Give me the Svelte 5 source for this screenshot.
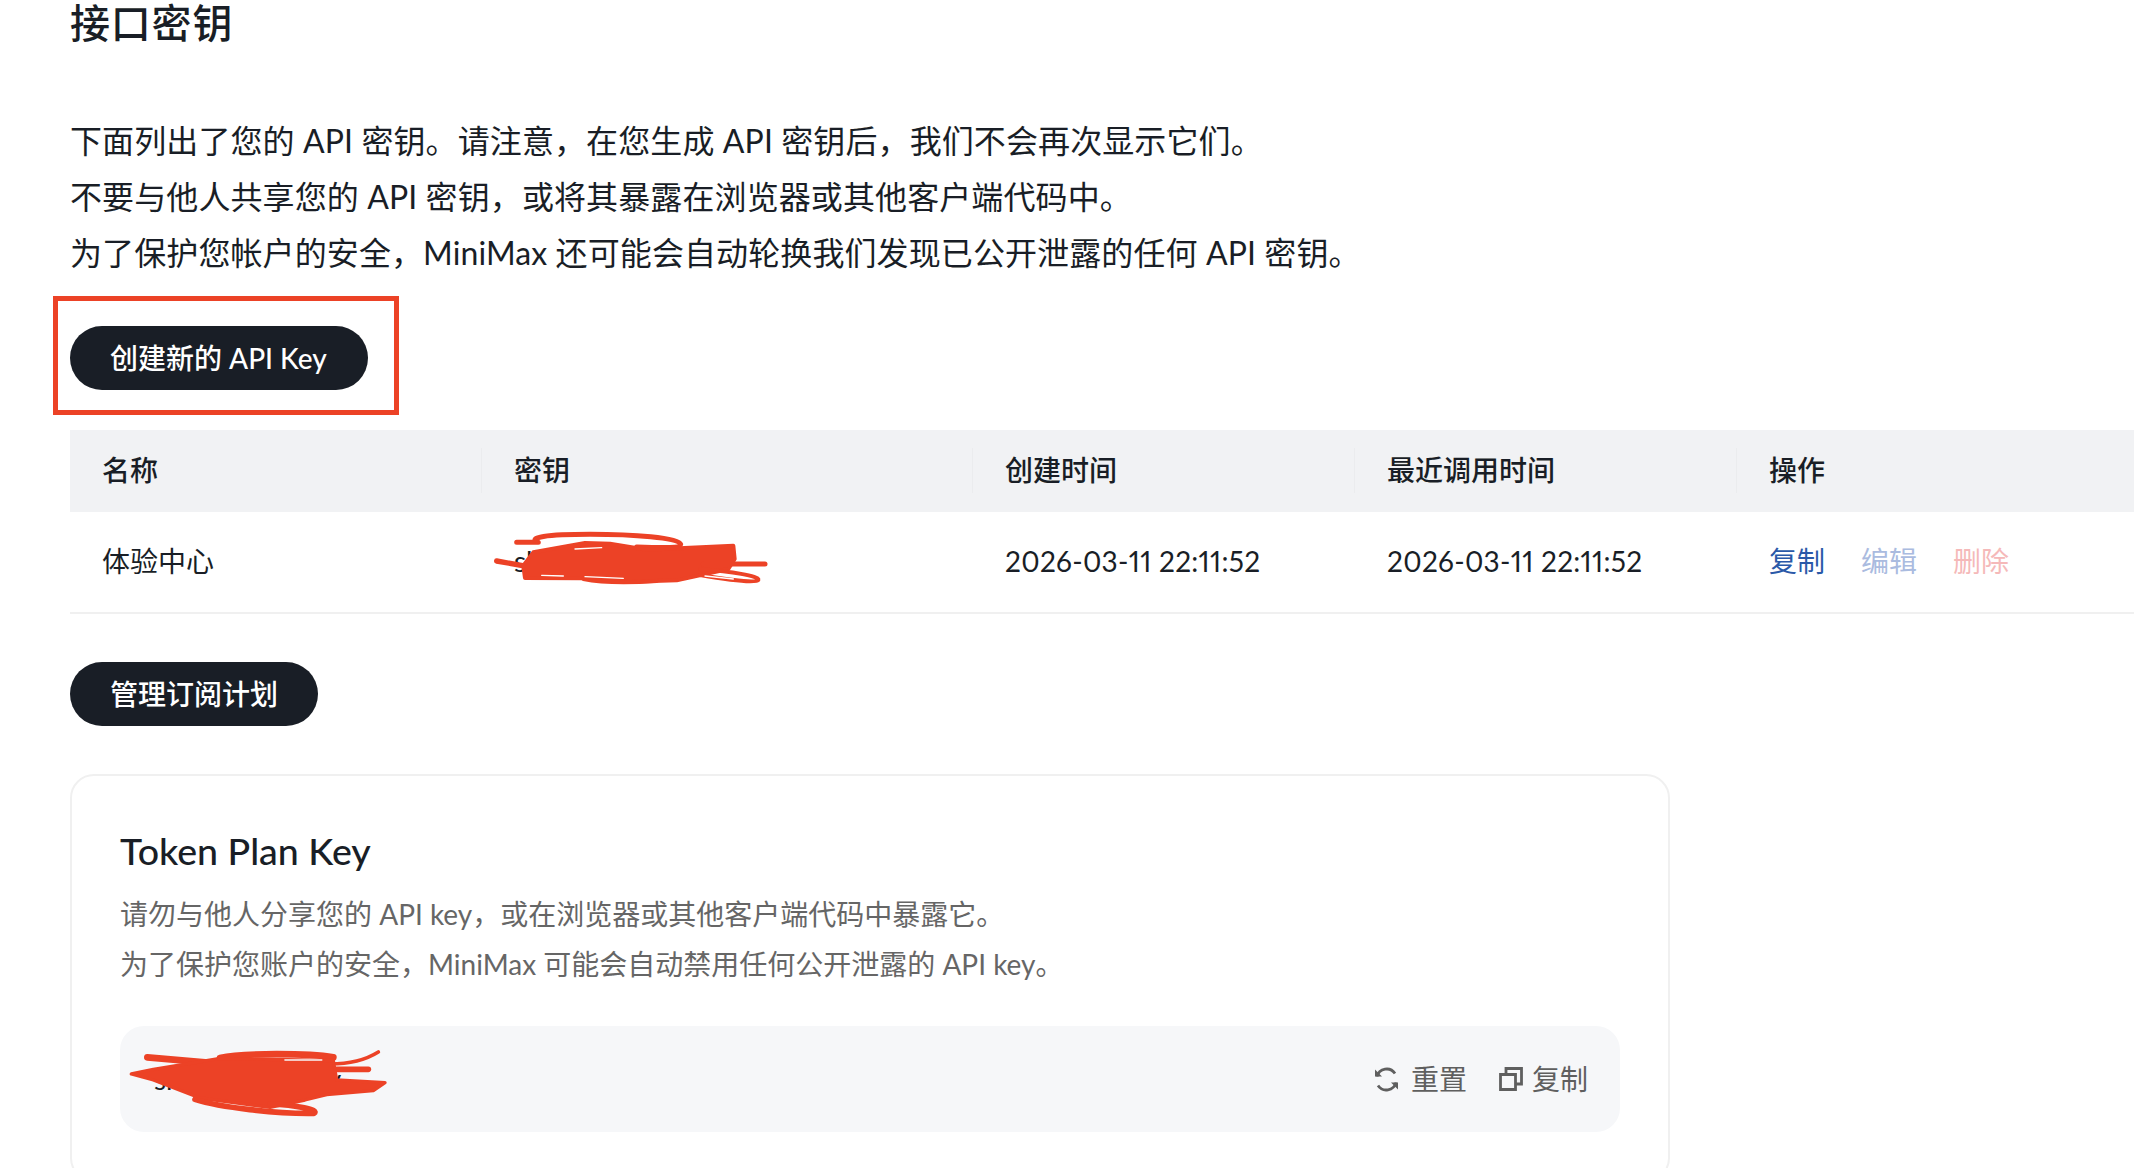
<script>
  const columns = ['名称', '密钥', '创建时间', '最近调用时间', '操作'];
  const paragraphs = [
    '下面列出了您的 API 密钥。请注意\uFF0C在您生成 API 密钥后\uFF0C我们不会再次显示它们。',
    '不要与他人共享您的 API 密钥\uFF0C或将其暴露在浏览器或其他客户端代码中。',
    '为了保护您帐户的安全\uFF0CMiniMax 还可能会自动轮换我们发现已公开泄露的任何 API 密钥。'
  ];
  const notes = [
    '请勿与他人分享您的 API key\uFF0C或在浏览器或其他客户端代码中暴露它。',
    '为了保护您账户的安全\uFF0CMiniMax 可能会自动禁用任何公开泄露的 API key。'
  ];
  const created = '2026-03-11 22:11:52';
</script>

<div class="page">
  <h1 class="title">接口密钥</h1>

  <div class="intro">
    {#each paragraphs as line}
      <p>{line}</p>
    {/each}
  </div>

  <div class="create-row">
    <button class="pill wide">创建新的 API Key</button>
    <span class="highlight"></span>
  </div>

  <div class="table">
    <div class="row head">
      {#each columns as col}
        <div class="cell">{col}</div>
      {/each}
    </div>
    <div class="row body">
      <div class="cell">体验中心</div>
      <div class="cell secret">
        <span>sk-cp-xxxxxxxx</span>
        <svg class="scribble one" viewBox="0 0 960 300" fill="none" stroke="#ec4226" stroke-linecap="round" stroke-linejoin="round">
          <path d="M140 100H205C170 85 230 76 360 76C490 76 625 86 632 106C630 118 560 116 500 114" stroke-width="15" />
          <path d="M80 156L170 172" stroke-width="16" />
          <path d="M160 170L190 130L345 102L420 104L530 122L790 110L794 150L775 180L620 214L480 218L340 208L165 207Z" fill="#ec4226" stroke-width="12" />
          <path d="M700 165H885" stroke-width="15" />
          <path d="M690 180C780 188 870 200 865 213C860 222 770 212 690 198" stroke-width="12" />
          <path d="M340 210C400 222 470 222 560 216" stroke-width="12" />
          <path d="M315 120L395 116M215 199L280 201M345 203L460 208M705 201L790 210" stroke="#fff" stroke-width="4" />
        </svg>
      </div>
      <div class="cell date">{created}</div>
      <div class="cell date">{created}</div>
      <div class="cell actions">
        <span class="copy">复制</span>
        <span class="edit">编辑</span>
        <span class="del">删除</span>
      </div>
    </div>
  </div>

  <button class="pill second">管理订阅计划</button>

  <section class="card">
    <h2>Token Plan Key</h2>
    <div class="desc">
      {#each notes as line}
        <p>{line}</p>
      {/each}
    </div>
    <div class="key-box">
      <div class="key">
        <span>sk-cp-xxxxxxxy</span>
        <svg class="scribble two" viewBox="0 0 960 330" fill="none" stroke="#ec4226" stroke-linecap="round" stroke-linejoin="round">
          <path d="M112 82L320 100" stroke-width="20" />
          <path d="M330 84C400 68 600 70 670 82" stroke-width="20" />
          <path d="M660 102C720 102 770 88 805 66" stroke-width="11" />
          <path d="M680 118H775" stroke-width="17" />
          <path d="M64 132L130 118L240 100L330 85L670 92L680 150L825 158L790 182L650 194L585 210L480 232L270 204L130 150Z" fill="#ec4226" stroke-width="10" />
          <path d="M255 208C330 232 500 252 612 250C630 240 560 225 480 222" stroke-width="17" />
          <path d="M525 90H635" stroke="#f6f7f9" stroke-width="5" />
        </svg>
      </div>
      <div class="key-actions">
        <span class="tool">
          <svg class="reset" width="25" height="25" viewBox="0 0 25 25" fill="none" stroke="#5f5f5f" stroke-width="2.8">
            <path d="M3 9.5A10 10 0 0 1 21 6.5" />
            <path d="M22 15.5A10 10 0 0 1 4 18.5" />
            <path d="M1 2.5L8 9.5H1Z" fill="#5f5f5f" stroke="none" />
            <path d="M24 22.5L17 15.5H24Z" fill="#5f5f5f" stroke="none" />
          </svg>
          重置
        </span>
        <span class="tool">
          <svg width="24" height="24" viewBox="0 0 24 24" fill="none" stroke="#5f5f5f" stroke-width="2.8">
            <path d="M1.5 7.5H16.5V22.5H1.5Z" />
            <path d="M7 7V1.5H22.5V17H17" />
          </svg>
          复制
        </span>
      </div>
    </div>
  </section>
</div>

<style>
  :global(body) {
    margin: 0;
    background: #fff;
  }

  .page {
    width: 2134px;
    height: 1168px;
    overflow: hidden;
    padding-left: 70px;
    box-sizing: border-box;
    font-family: "Lato", "Noto Sans CJK SC", sans-serif;
    font-variant-numeric: proportional-nums;
    color: #191e26;
  }

  p {
    margin: 0;
  }

  .title {
    margin: 0;
    font-size: 40px;
    line-height: 46px;
    font-weight: 500;
    letter-spacing: 0.8px;
  }

  .intro {
    margin-top: 67px;
    font-size: 32px;
    line-height: 56px;
    letter-spacing: 0.1px;
  }

  /* ── Buttons ── */
  .pill {
    display: block;
    height: 64px;
    padding: 0 40px 3px;
    border: 0;
    border-radius: 32px;
    background: #191e26;
    color: #fff;
    font-family: inherit;
    font-size: 28px;
    font-weight: 500;
  }

  .wide {
    padding-right: 41px;
  }

  .create-row {
    position: relative;
    width: max-content;
    margin-top: 45px;
  }

  .highlight {
    position: absolute;
    inset: -30px -31px -25px -17px;
    border: 5px solid #ec4226;
  }

  .second {
    margin-top: 48px;
  }

  /* ── Table ── */
  .table {
    margin-top: 40px;
    font-size: 28px;
    line-height: 40px;
  }

  .row {
    display: grid;
    grid-template-columns: 412px 491px 382px 382px 1fr;
    align-items: center;
    box-sizing: border-box;
    padding-bottom: 2px;
  }

  .head {
    height: 82px;
    background: #f1f2f4;
    font-weight: 500;
  }

  .body {
    height: 102px;
    border-bottom: 2px solid #f0f0f0;
  }

  .cell {
    position: relative;
    padding-left: 32px;
  }

  .date {
    letter-spacing: 0.3px;
  }

  .head .cell + .cell::before {
    content: '';
    position: absolute;
    left: -1px;
    top: 50%;
    height: 45px;
    margin-top: -22px;
    border-left: 1px solid #ebecee;
  }

  .scribble {
    position: absolute;
  }

  .one {
    left: -12px;
    top: -32px;
    width: 320px;
    height: 100px;
  }

  .actions {
    display: flex;
    gap: 36px;
  }

  .copy {
    color: #2a59a8;
  }

  .edit {
    color: #aabbdf;
  }

  .del {
    color: #f5b9b9;
  }

  /* ── Token plan card ── */
  .card {
    width: 1600px;
    margin-top: 48px;
    padding: 50px 48px 48px;
    box-sizing: border-box;
    border: 2px solid #f0f0f0;
    border-radius: 24px;
  }

  h2 {
    margin: 0;
    font-size: 37.5px;
    line-height: 50px;
    font-weight: 500;
  }

  .desc {
    margin-top: 13px;
    font-size: 28px;
    line-height: 50px;
    color: #666;
  }

  .key-box {
    display: flex;
    align-items: center;
    justify-content: space-between;
    height: 106px;
    margin-top: 37px;
    padding: 0 32px 0 34px;
    border-radius: 24px;
    background: #f6f7f9;
    font-size: 28px;
    line-height: 40px;
  }

  .key {
    position: relative;
  }

  .two {
    left: -44px;
    top: -29px;
    width: 320px;
    height: 110px;
  }

  .key-actions {
    display: flex;
    gap: 32px;
    color: #5f5f5f;
  }

  .tool {
    display: flex;
    align-items: center;
    gap: 9px;
  }

  .reset {
    margin-right: 3px;
  }
</style>
